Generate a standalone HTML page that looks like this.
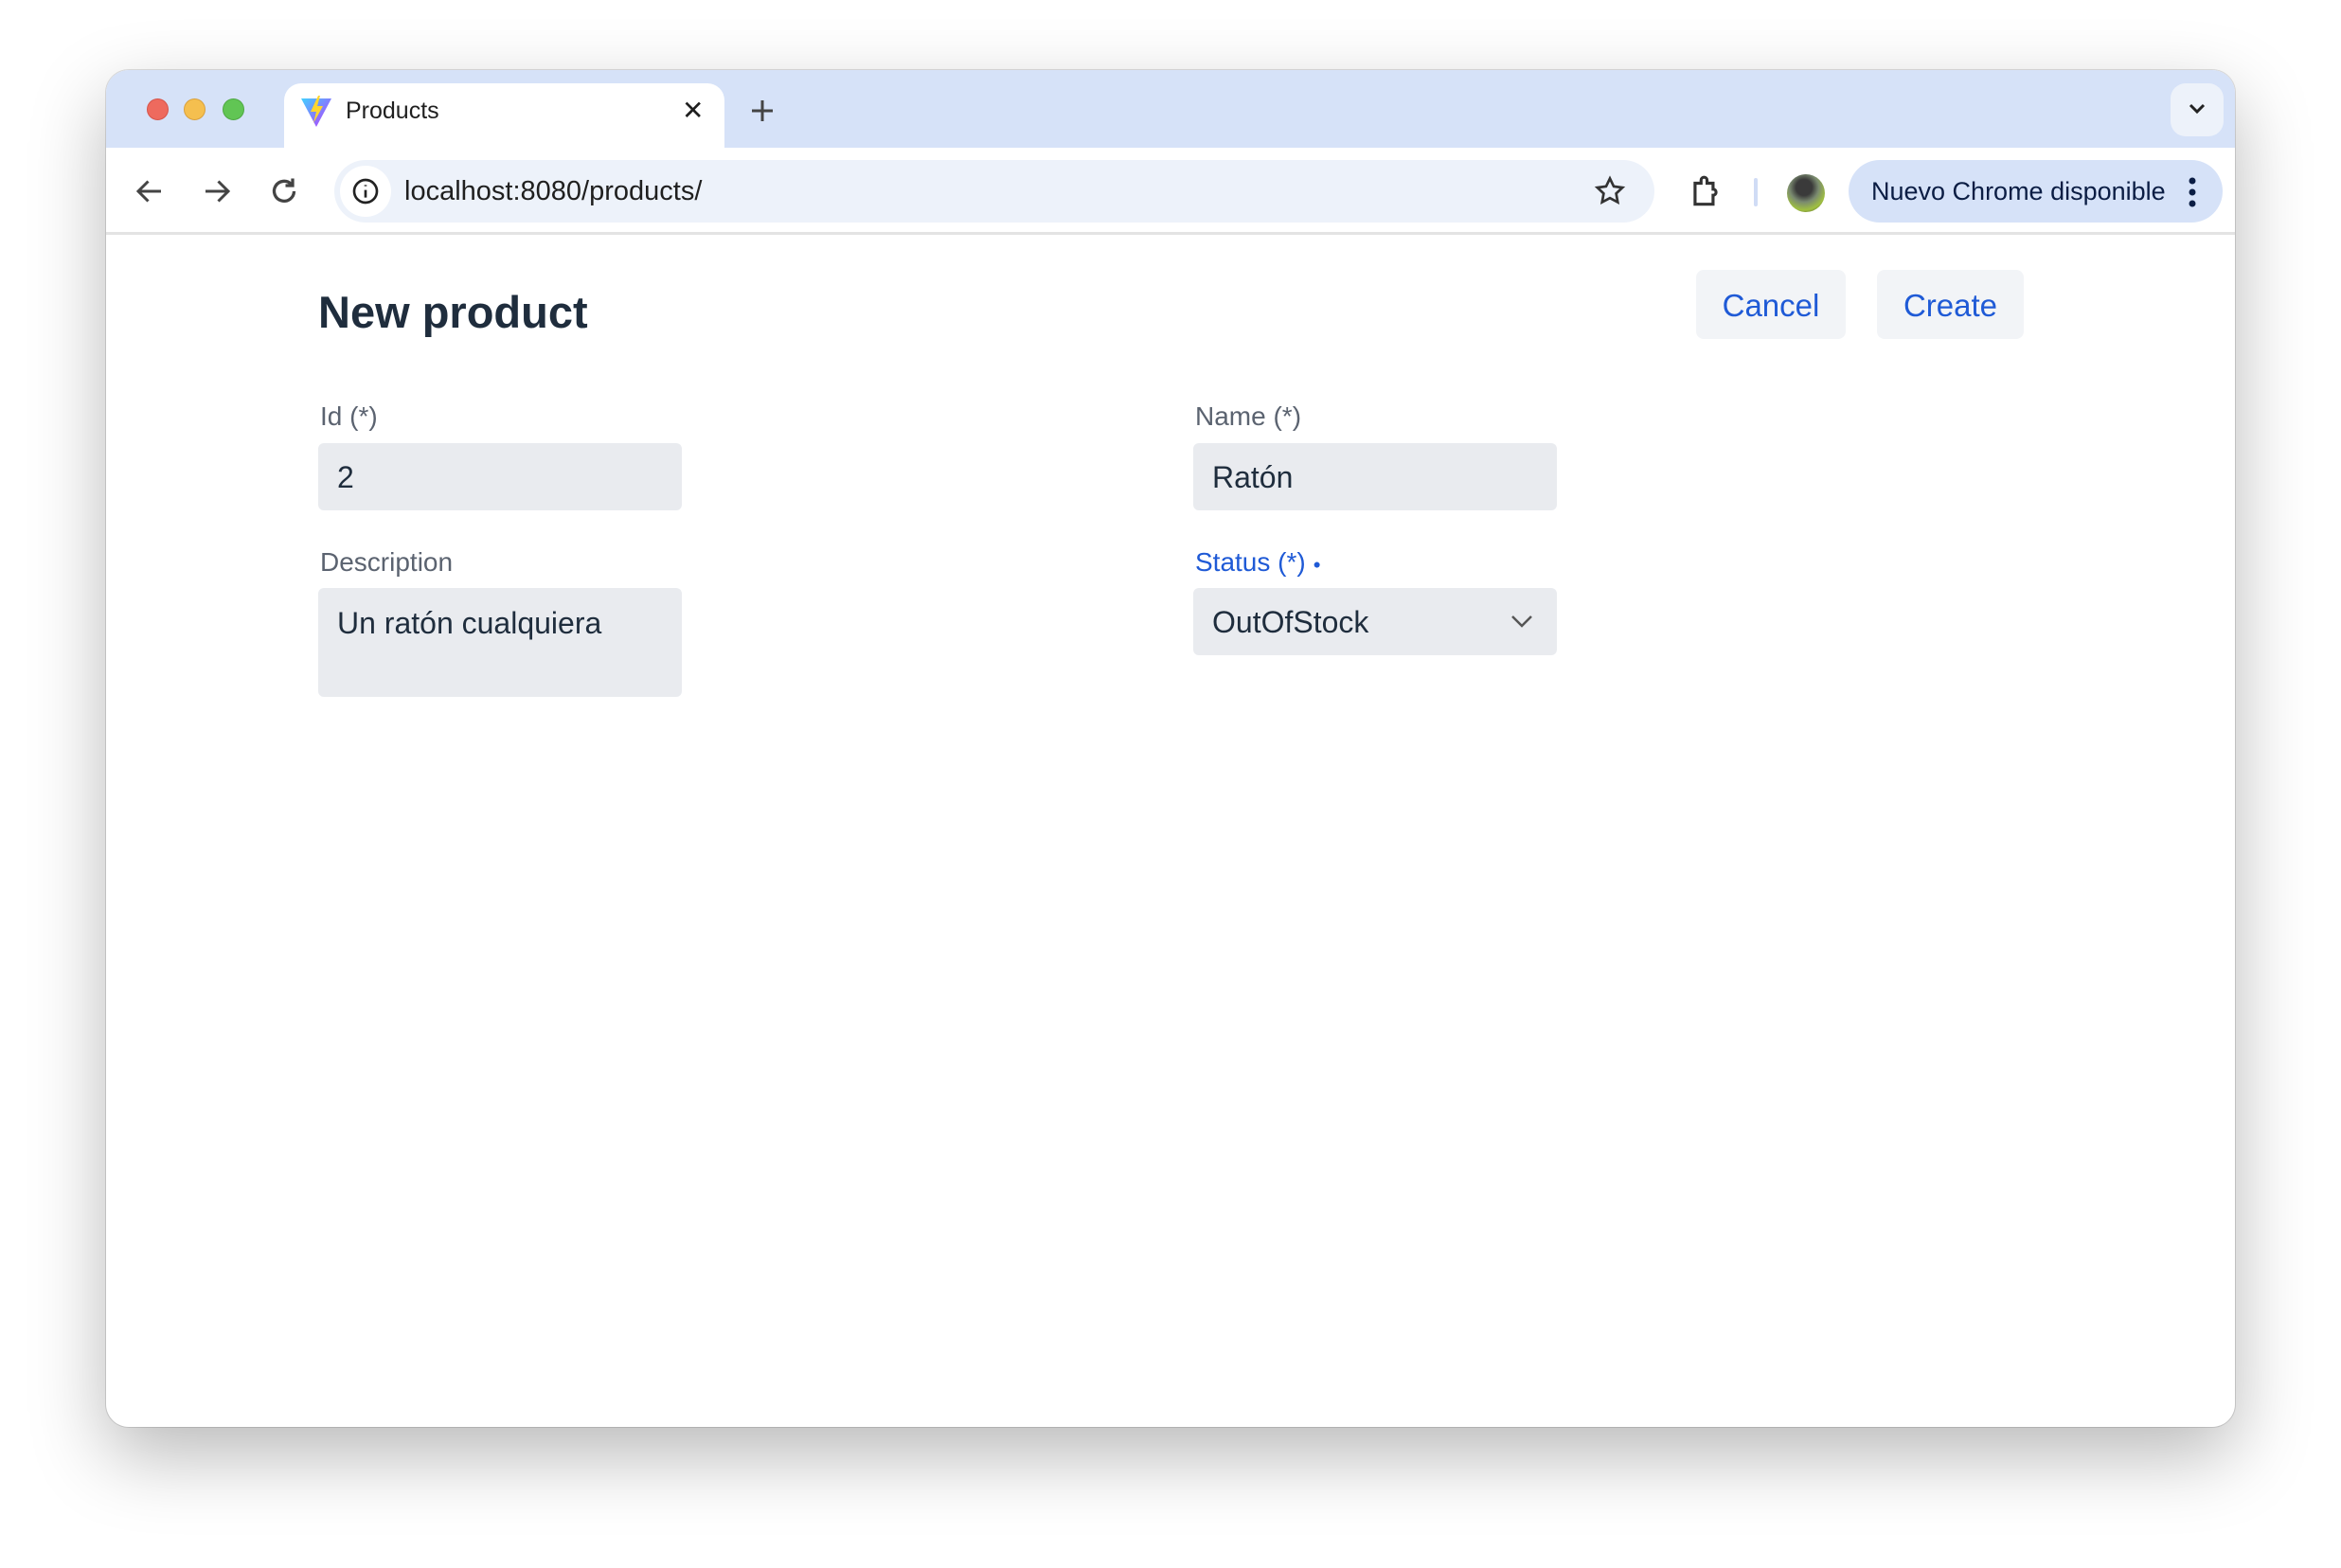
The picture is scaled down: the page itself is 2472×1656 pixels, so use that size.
<!DOCTYPE html>
<html><head><meta charset="utf-8"><style>
*{box-sizing:border-box;margin:0;padding:0}
body{width:2472px;height:1656px;background:#fff;font-family:"Liberation Sans",sans-serif;position:relative;overflow:hidden}
.win{position:absolute;left:112px;top:74px;width:2248px;height:1433px;border-radius:24px;background:#fff;overflow:hidden;box-shadow:0 30px 80px rgba(0,0,0,.28),0 0 0 1px rgba(0,0,0,.12)}
.tabbar{position:absolute;left:0;top:0;right:0;height:82px;background:#d6e2f8}
.dot{position:absolute;top:30px;width:23px;height:23px;border-radius:50%}
.tab{position:absolute;left:188px;top:14px;width:465px;height:70px;background:#fff;border-radius:18px 18px 0 0}
.toolbar{position:absolute;left:0;top:82px;right:0;height:92px;background:#fff;border-bottom:3px solid #e3e3e3}
.addr{position:absolute;left:241px;top:13px;width:1394px;height:66px;border-radius:33px;background:#edf2fa}
.pill{position:absolute;left:1840px;top:13px;width:395px;height:66px;border-radius:33px;background:#d6e2f8;font-size:27px;color:#0b1d44;line-height:66px;padding-left:24px}
.c{position:absolute}
h1{position:absolute;left:224px;top:228px;font-size:47px;font-weight:bold;color:#1f2d3d}
.btn{position:absolute;top:211px;height:73px;background:#f2f4f7;border-radius:8px;color:#1f5ad6;font-size:33px;text-align:center;line-height:75px}
.lbl{position:absolute;font-size:28px;color:#5b6370}
.inp{position:absolute;width:384px;height:71px;background:#e9ebef;border-radius:6px;font-size:32px;color:#1f2d3d;padding-left:20px;line-height:73px}
</style></head><body>
<div class="win">
 <div class="tabbar">
  <div class="dot" style="left:43px;background:#ee6a5e;border:1px solid #d6544a"></div>
  <div class="dot" style="left:82px;background:#f5bf4f;border:1px solid #d9a03c"></div>
  <div class="dot" style="left:123px;background:#61c554;border:1px solid #4fa843"></div>
  <div class="tab">
   <svg style="position:absolute;left:16px;top:12px" width="36" height="36" viewBox="0 0 36 36"><defs><linearGradient id="g" x1="0" y1="0" x2="1" y2="1"><stop offset="0" stop-color="#41d1ff"/><stop offset="1" stop-color="#bd34fe"/></linearGradient></defs><path d="M2 4 L34 4 L18 34 Z" fill="url(#g)"/><path d="M20 1 L12 18 L18 18 L15 30 L25 12 L19 12 L22 1Z" fill="#ffd62e"/></svg>
   <div class="c" style="left:65px;top:15px;font-size:25px;color:#1f1f1f">Products</div>
   <div class="c" style="left:420px;top:12px;font-size:28px;color:#1f1f1f">✕</div>
  </div>
  <svg class="c" style="left:680px;top:30px" width="26" height="26" viewBox="0 0 26 26" stroke="#444" stroke-width="3"><path d="M13 2v22M2 13h22"/></svg>
  <div class="c" style="left:2180px;top:14px;width:56px;height:56px;border-radius:16px;background:#edf2fa"></div>
  <svg class="c" style="left:2198px;top:34px" width="20" height="14" viewBox="0 0 20 14" fill="none" stroke="#222" stroke-width="3"><path d="M3 3l7 7 7-7"/></svg>
 </div>
 <div class="toolbar">
  <svg class="c" style="left:28px;top:28px" width="36" height="36" viewBox="0 0 24 24" fill="none" stroke="#444" stroke-width="2"><path d="M20 12H5M11 5l-7 7 7 7"/></svg>
  <svg class="c" style="left:99px;top:28px" width="36" height="36" viewBox="0 0 24 24" fill="none" stroke="#444" stroke-width="2"><path d="M4 12h15M13 5l7 7-7 7"/></svg>
  <svg class="c" style="left:170px;top:28px" width="36" height="36" viewBox="0 0 24 24" fill="none" stroke="#444" stroke-width="2.2"><path d="M19 12a7 7 0 1 1-2-5M18 3v5h-5"/></svg>
  <div class="addr">
   <div class="c" style="left:6px;top:6px;width:54px;height:54px;border-radius:50%;background:#fff"></div>
   <svg class="c" style="left:17px;top:17px" width="32" height="32" viewBox="0 0 24 24" fill="none" stroke="#222" stroke-width="2"><circle cx="12" cy="12" r="9"/><path d="M12 11v6M12 7v1"/></svg>
   <div class="c" style="left:74px;top:17px;font-size:29px;color:#1f1f1f">localhost:8080/products/</div>
   <svg class="c" style="left:1329px;top:15px" width="36" height="36" viewBox="0 0 24 24" fill="none" stroke="#333" stroke-width="1.8"><path d="M12 3l2.7 5.6 6.1.8-4.4 4.2 1.1 6.1L12 16.8 6.5 19.7l1.1-6.1L3.2 9.4l6.1-.8z"/></svg>
  </div>
  <svg class="c" style="left:1670px;top:28px" width="38" height="38" viewBox="0 0 24 24" fill="none" stroke="#333" stroke-width="2"><path d="M5 6h4V4a2 2 0 0 1 4 0v2h4v4a2 2 0 0 1 0 4v6H5z"/></svg>
  <div class="c" style="left:1740px;top:32px;width:4px;height:30px;background:#d0dcf5;border-radius:2px"></div>
  <div class="c" style="left:1775px;top:28px;width:40px;height:40px;border-radius:50%;background:radial-gradient(circle at 45% 35%,#3a3a3a 0 25%,#7a8a70 45%,#a0c040 70%,#2a2a2a)"></div>
  <div class="pill">Nuevo Chrome disponible
   <svg class="c" style="left:358px;top:18px" width="10" height="32" viewBox="0 0 10 32"><circle cx="5" cy="4" r="3.5" fill="#0b1d44"/><circle cx="5" cy="16" r="3.5" fill="#0b1d44"/><circle cx="5" cy="28" r="3.5" fill="#0b1d44"/></svg>
  </div>
 </div>
 <h1>New product</h1>
 <div class="btn" style="left:1679px;width:158px">Cancel</div>
 <div class="btn" style="left:1870px;width:155px">Create</div>
 <div class="lbl" style="left:226px;top:350px">Id (*)</div>
 <div class="inp" style="left:224px;top:394px">2</div>
 <div class="lbl" style="left:1150px;top:350px">Name (*)</div>
 <div class="inp" style="left:1148px;top:394px">Ratón</div>
 <div class="lbl" style="left:226px;top:504px">Description</div>
 <div class="inp" style="left:224px;top:547px;height:115px;line-height:1;padding-top:21px">Un ratón cualquiera</div>
 <div class="lbl" style="left:1150px;top:504px;color:#1f5ad6">Status (*) <span style="font-size:14px;vertical-align:middle">●</span></div>
 <div class="inp" style="left:1148px;top:547px">OutOfStock
  <svg class="c" style="left:334px;top:24px" width="26" height="22" viewBox="0 0 26 22" fill="none" stroke="#555" stroke-width="2.5"><path d="M3 6l10 10 10-10"/></svg>
 </div>
</div>
</body></html>
